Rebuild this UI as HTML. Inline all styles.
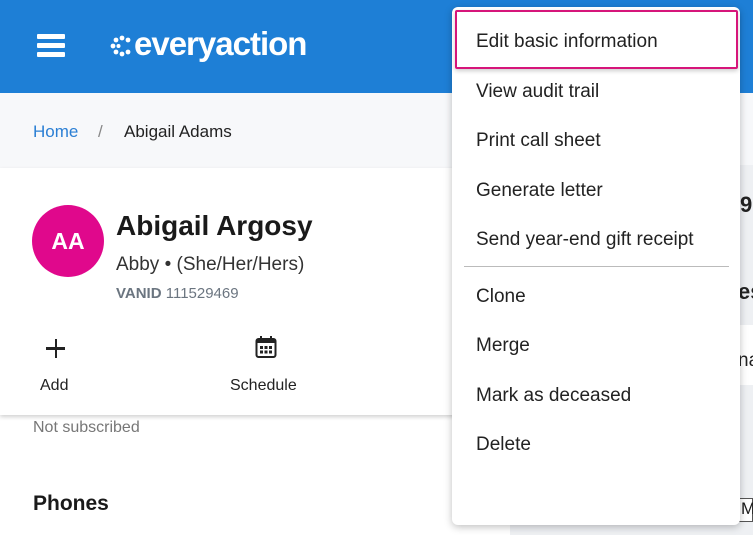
<!DOCTYPE html>
<html><head><meta charset="utf-8"><style>
*{margin:0;padding:0;box-sizing:border-box}
body{width:753px;height:535px;overflow:hidden;position:relative;font-family:"Liberation Sans","DejaVu Sans",sans-serif;background:#fff;color:#1a1a1a}
.abs{position:absolute}
.hdr{left:0;top:0;width:753px;height:93px;background:#1e7fd6}
.bc{left:0;top:93px;width:753px;height:75px;background:#f7f8fa}
.gray{left:510px;top:165px;width:243px;height:370px;background:#eef0f3}
.card{left:0;top:168px;width:510px;height:247px;background:#fff;box-shadow:0 2px 4px rgba(0,0,0,.18)}
.menu{left:452px;top:7px;width:288px;height:518px;background:#fff;border-radius:6px;box-shadow:0 2px 8px rgba(0,0,0,.25)}
.item{position:absolute;left:24px;font-size:19px;color:#222;line-height:24px}
</style></head><body>
<div class="abs hdr"></div>
<div class="abs" style="left:37px;top:34px;width:28px;height:5px;background:#fff;border-radius:1px"></div>
<div class="abs" style="left:37px;top:43px;width:28px;height:5px;background:#fff;border-radius:1px"></div>
<div class="abs" style="left:37px;top:52px;width:28px;height:5px;background:#fff;border-radius:1px"></div>
<svg class="abs" style="left:109px;top:34px" width="26" height="24" viewBox="0 0 26 24" fill="#fff">
<circle cx="13" cy="4" r="2.4"/><circle cx="19" cy="6" r="2.4"/><circle cx="7" cy="6" r="2.4"/><circle cx="4" cy="12" r="2.4"/><circle cx="9.5" cy="12" r="2"/><circle cx="7" cy="18" r="2.4"/><circle cx="13" cy="20" r="2.4"/><circle cx="19" cy="18" r="2.4"/></svg>
<div class="abs" style="left:134px;top:25px;font-size:33px;color:#fff;letter-spacing:-1px;font-weight:bold">everyaction</div>
<div class="abs bc"></div>
<div class="abs" style="left:33px;top:122px;font-size:17px;color:#2b7fd4">Home</div>
<div class="abs" style="left:98px;top:122px;font-size:17px;color:#888">/</div>
<div class="abs" style="left:124px;top:122px;font-size:17px;color:#222">Abigail Adams</div>
<div class="abs gray"></div>
<div class="abs" style="left:740px;top:192px;font-size:22px;font-weight:bold;color:#222">9</div>
<div class="abs" style="left:738px;top:279px;font-size:22px;font-weight:bold;color:#222">es</div>
<div class="abs" style="left:510px;top:325px;width:243px;height:60px;background:#fff"></div>
<div class="abs" style="left:738px;top:350px;font-size:19px;color:#222">na</div>
<div class="abs" style="left:738px;top:498px;width:15px;height:24px;border:1px solid #555;background:#fff;font-size:17px;padding-left:2px">M</div>
<div class="abs card"></div>
<div class="abs" style="left:32px;top:205px;width:72px;height:72px;border-radius:50%;background:#e0088c;color:#fff;font-weight:bold;font-size:23px;text-align:center;line-height:72px">AA</div>
<div class="abs" style="left:116px;top:210px;font-size:28px;font-weight:bold;color:#1a1a1a">Abigail Argosy</div>
<div class="abs" style="left:116px;top:254px;font-size:19px;color:#333">Abby • (She/Her/Hers)</div>
<div class="abs" style="left:116px;top:285px;font-size:15px;color:#6b7580"><b>VANID</b> 111529469</div>
<div class="abs" style="left:46px;top:347px;width:19px;height:2.5px;background:#222"></div>
<div class="abs" style="left:54.5px;top:338.5px;width:2.5px;height:19px;background:#222"></div>
<div class="abs" style="left:40px;top:377px;font-size:16px;color:#222">Add</div>
<svg class="abs" style="left:255px;top:335px" width="22" height="24" viewBox="0 0 22 24"><rect x="1.5" y="4" width="19" height="18" rx="2" fill="none" stroke="#222" stroke-width="2"/><rect x="1.5" y="4" width="19" height="4" fill="#222"/><rect x="5" y="1" width="2" height="5" fill="#222"/><rect x="15" y="1" width="2" height="5" fill="#222"/><g fill="#222"><rect x="5" y="11" width="3" height="3"/><rect x="9.5" y="11" width="3" height="3"/><rect x="14" y="11" width="3" height="3"/><rect x="5" y="15.5" width="3" height="3"/><rect x="9.5" y="15.5" width="3" height="3"/><rect x="14" y="15.5" width="3" height="3"/></g></svg>
<div class="abs" style="left:230px;top:377px;font-size:16px;color:#222">Schedule</div>
<div class="abs" style="left:33px;top:419px;font-size:16px;color:#777">Not subscribed</div>
<div class="abs" style="left:33px;top:492px;font-size:21px;font-weight:bold;color:#1a1a1a">Phones</div>
<div class="abs menu">
<div class="abs" style="left:3px;top:3px;width:283px;height:59px;border:2.5px solid #d6157a;border-radius:2px;box-shadow:0 2px 4px rgba(0,0,0,.2)"></div>
<div class="item" style="top:23px">Edit basic information</div>
<div class="item" style="top:73px">View audit trail</div>
<div class="item" style="top:122px">Print call sheet</div>
<div class="item" style="top:172px">Generate letter</div>
<div class="item" style="top:221px">Send year-end gift receipt</div>
<div class="abs" style="left:12px;top:259px;width:265px;height:1px;background:#bbb"></div>
<div class="item" style="top:278px">Clone</div>
<div class="item" style="top:327px">Merge</div>
<div class="item" style="top:377px">Mark as deceased</div>
<div class="item" style="top:426px">Delete</div>
</div>
</body></html>
